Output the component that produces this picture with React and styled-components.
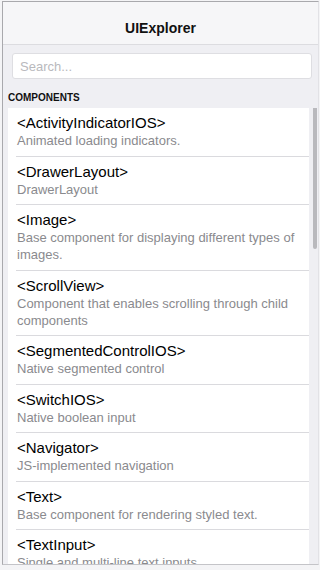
import React from 'react';
import styled, { createGlobalStyle } from 'styled-components';

const GlobalStyle = createGlobalStyle`
  html, body {
    margin: 0;
    padding: 0;
    background: #f4f4f6;
    font-family: "Liberation Sans", Arial, sans-serif;
  }
`;

const Frame = styled.div`
  box-sizing: border-box;
  margin: 1px 1px 0 2px;
  height: 564px;
  display: flex;
  flex-direction: column;
  background: #efeff3;
  border-top: 1px solid #a9a9ad;
  border-left: 1px solid #a9a9ad;
  border-bottom: 1px solid #c4c4c8;
  border-right: 1px solid #e2e2e6;
  overflow: hidden;
`;

const Header = styled.header`
  box-sizing: border-box;
  height: 43px;
  padding-top: 16px;
  background: #f6f6f8;
  border-bottom: 1px solid #dcdce0;
  text-align: center;
`;

const Title = styled.h1`
  margin: 0;
  font-size: 14px;
  line-height: 20px;
  font-weight: bold;
  color: #111;
`;

const SearchWrap = styled.div`
  padding: 8px 6px 8px 9px;
`;

const SearchInput = styled.input`
  box-sizing: border-box;
  display: block;
  width: 100%;
  height: 26px;
  padding: 0 7px;
  border: 1px solid #dedee2;
  border-radius: 3px;
  background: #fff;
  font-family: "Liberation Sans", Arial, sans-serif;
  font-size: 13px;
  color: #333;
  outline: none;

  &::placeholder {
    color: #b9b9bd;
  }
`;

const SectionHeader = styled.div`
  padding-left: 5px;
  height: 21px;
  line-height: 21px;
  font-size: 10px;
  font-weight: bold;
  color: #111;
`;

const ListArea = styled.div`
  position: relative;
  flex: 1;
  overflow: hidden;
  padding: 0 9px 0 5px;
`;

const Scrollbar = styled.div`
  position: absolute;
  top: -17px;
  right: 1px;
  width: 4px;
  height: 158px;
  border-radius: 2px;
  background: #b9b9bd;
`;

const Row = styled.div`
  background: #fff;
  padding-left: 8px;
`;

const RowInner = styled.div`
  padding: 6px 0 6.5px 1px;
  border-bottom: 1px solid ${(p) => (p.last ? 'transparent' : '#dadade')};
`;

const RowTitle = styled.div`
  font-size: 15px;
  line-height: 18px;
  color: #000;
`;

const RowDesc = styled.div`
  font-size: 13px;
  line-height: 17px;
  color: #8a8a8e;
  padding-right: 8px;
`;

const components = [
  { title: '<ActivityIndicatorIOS>', desc: 'Animated loading indicators.' },
  { title: '<DrawerLayout>', desc: 'DrawerLayout' },
  { title: '<Image>', desc: 'Base component for displaying different types of images.' },
  { title: '<ScrollView>', desc: 'Component that enables scrolling through child components' },
  { title: '<SegmentedControlIOS>', desc: 'Native segmented control' },
  { title: '<SwitchIOS>', desc: 'Native boolean input' },
  { title: '<Navigator>', desc: 'JS-implemented navigation' },
  { title: '<Text>', desc: 'Base component for rendering styled text.' },
  { title: '<TextInput>', desc: 'Single and multi-line text inputs.' },
];

const App = () => (
  <>
    <GlobalStyle />
    <Frame>
      <Header>
        <Title>UIExplorer</Title>
      </Header>
      <SearchWrap>
        <SearchInput type="text" placeholder="Search..." />
      </SearchWrap>
      <SectionHeader>COMPONENTS</SectionHeader>
      <ListArea>
        {components.map((item, i) => (
          <Row key={item.title}>
            <RowInner last={i === components.length - 1}>
              <RowTitle>{item.title}</RowTitle>
              <RowDesc>{item.desc}</RowDesc>
            </RowInner>
          </Row>
        ))}
        <Scrollbar />
      </ListArea>
    </Frame>
  </>
);

export default App;
